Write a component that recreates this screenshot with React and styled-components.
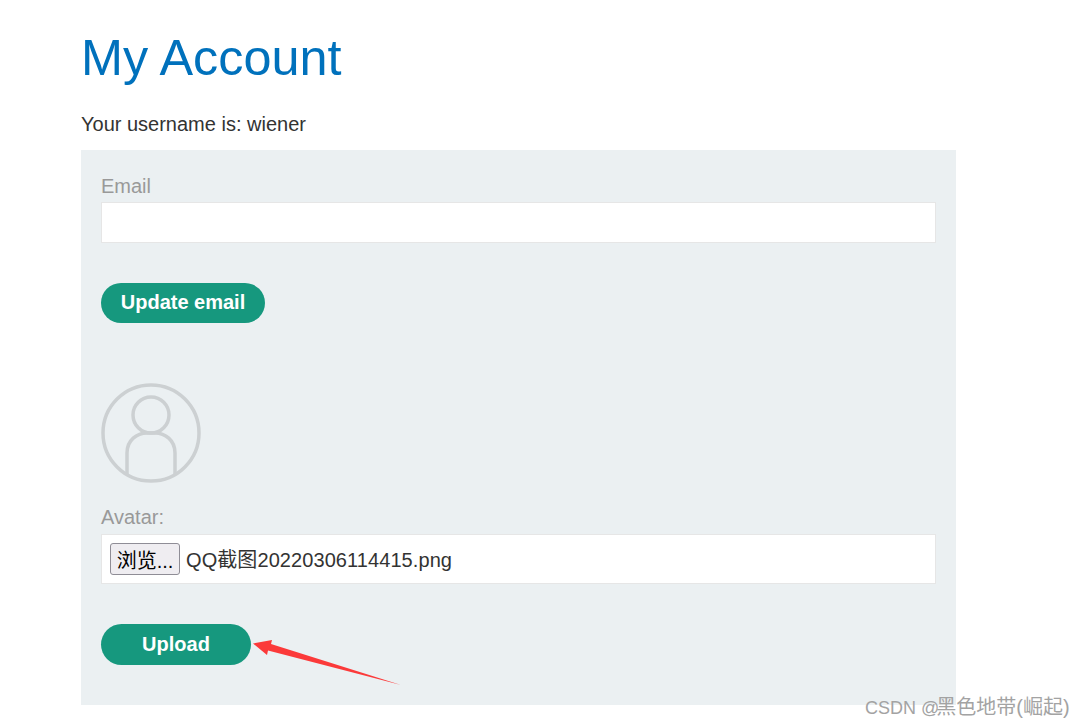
import styled, { createGlobalStyle } from 'styled-components';

const GlobalStyle = createGlobalStyle`
    html, body {
        margin: 0;
        padding: 0;
        background: #fff;
    }
    body {
        font-family: "Liberation Sans", Arial, "Noto Sans CJK SC", sans-serif;
        color: #333332;
        font-size: 20px;
    }
`;

const Page = styled.div`
    position: relative;
    width: 1083px;
    height: 727px;
    overflow: hidden;
`;
const Content = styled.div`
    width: 875px;
    margin-left: 81px;
    padding-top: 28px;
`;
const Title = styled.h1`
    margin: 0;
    font-size: 50.4px;
    line-height: 60px;
    font-weight: 400;
    color: #0071bc;
`;
const Username = styled.p`
    margin: 0;
    padding: 24px 0 14px;
    line-height: 24px;
`;
const Panel = styled.div`
    background: #ebf0f2;
    height: 555px;
    box-sizing: border-box;
    padding: 24px 20px 0;
`;
const Label = styled.label`
    display: block;
    color: #999;
    line-height: ${props => props.$line}px;
    height: ${props => props.$height}px;
`;
const Input = styled.input`
    display: block;
    box-sizing: border-box;
    width: 100%;
    height: 41px;
    background: #fff;
    border: 1px solid #e6e6e6;
    padding: 0 8px;
    margin: 0 0 40px;
`;
const Button = styled.button`
    display: block;
    box-sizing: border-box;
    width: ${props => props.$width}px;
    height: ${props => props.$height}px;
    padding: 0 0 ${props => props.$lift}px;
    border: none;
    border-radius: 25px;
    background: #16987e;
    color: #fff;
    font-family: inherit;
    font-size: 20px;
    font-weight: 700;
`;
const Avatar = styled.svg`
    display: block;
    width: 100px;
    height: 100px;
    margin: 60px 0 20px;
`;
const FileRow = styled.div`
    box-sizing: border-box;
    height: 50px;
    display: flex;
    align-items: center;
    gap: 6px;
    padding: 0 8px;
    background: #fff;
    border: 1px solid #e6e6e6;
    margin-bottom: 40px;
`;
const FileButton = styled.div`
    box-sizing: border-box;
    width: 70px;
    height: 32px;
    display: flex;
    align-items: center;
    justify-content: center;
    background: #efedf1;
    border: 1px solid #8f8d96;
    border-radius: 3px;
    color: #000;
    white-space: nowrap;
`;
const FileName = styled.span`
    white-space: nowrap;
    letter-spacing: 0.08px;
    padding-bottom: 2px;
`;
const Arrow = styled.svg`
    position: absolute;
    left: 250px;
    top: 630px;
    width: 160px;
    height: 60px;
`;
const Watermark = styled.div`
    position: absolute;
    left: 865px;
    top: 695px;
    font-size: 18px;
    line-height: 24px;
    color: #a3a3a3;
    white-space: nowrap;
    font-family: "Liberation Sans", "Noto Sans CJK SC", sans-serif;
`;
const WatermarkCjk = styled.span`
    font-size: 20px;
    margin-left: -3px;
`;

const App = () => {
    return (
        <Page>
            <GlobalStyle />
            <Content>
                <Title>My Account</Title>
                <Username>Your username is: wiener</Username>
                <Panel>
                    <Label $line={24} $height={28}>Email</Label>
                    <Input type="email" />
                    <Button $width={164} $height={40} $lift={2}>Update email</Button>
                    <Avatar viewBox="0 0 100 100" fill="none" stroke="#ccd0d2" strokeWidth="3.5">
                        <circle cx="50" cy="50" r="48" />
                        <circle cx="50" cy="32" r="18" />
                        <path d="M26 92 V70 C26 57 36 50 46 50 H54 C64 50 74 57 74 70 V92" />
                    </Avatar>
                    <Label $line={28} $height={31}>Avatar:</Label>
                    <FileRow>
                        <FileButton>浏览...</FileButton>
                        <FileName>QQ截图20220306114415.png</FileName>
                    </FileRow>
                    <Button $width={150} $height={41} $lift={0}>Upload</Button>
                </Panel>
            </Content>
            <Arrow viewBox="0 0 160 60">
                <path d="M3 13.5 L22 10 L21 14 L151 55 L18 20.5 L17 25 Z" fill="#fb3a3a" />
            </Arrow>
            <Watermark>CSDN @<WatermarkCjk>黑色地带(崛起)</WatermarkCjk></Watermark>
        </Page>
    )
}

export default App
